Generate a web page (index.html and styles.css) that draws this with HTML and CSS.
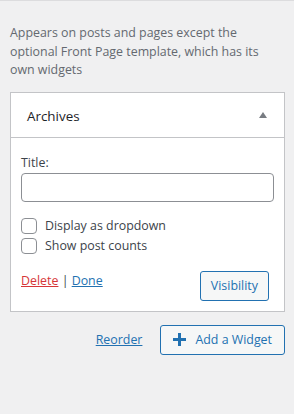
FILE: index.html
```html
<!DOCTYPE html>
<html lang="en">

<head>
  <meta charset="UTF-8">
  <title>Widget Area</title>
  <link rel="stylesheet" href="styles.css">
</head>

<body>
  <div class="panel">
    <p class="description">Appears on posts and pages except the optional Front Page template, which has its own widgets</p>

    <!-- Archives widget -->
    <div class="widget">
      <div class="widget-top">
        <h3>Archives</h3>
        <span class="toggle"></span>
      </div>

      <div class="widget-inside">
        <label class="field-label" for="title">Title:</label>
        <input type="text" id="title" class="text-input">

        <div class="checks">
          <label class="check"><input type="checkbox"> Display as dropdown</label>
          <label class="check"><input type="checkbox"> Show post counts</label>
        </div>

        <div class="widget-actions">
          <div class="links">
            <a href="#" class="delete">Delete</a> | <a href="#" class="done">Done</a>
          </div>
          <button class="button">Visibility</button>
        </div>
      </div>
    </div>

    <!-- Footer actions -->
    <div class="area-actions">
      <a href="#" class="reorder">Reorder</a>
      <button class="button add-widget">
        <svg width="13" height="13" viewBox="0 0 13 13"><path d="M5 0h3v5h5v3H8v5H5V8H0V5h5z" fill="#2271b1"/></svg>
        Add a Widget
      </button>
    </div>
  </div>
</body>

</html>
```

FILE: styles.css
```css
body {
  margin: 0;
  padding: 0;
  font-family: 'Open Sans', sans-serif;
  font-size: 12.4px;
  color: #3c434a;
  background-color: #f0f0f1;
}

.panel {
  border-top: 1px solid #dcdcde;
  padding: 23px 9px 0 10px;
}

.description {
  margin: 0 0 12px;
  color: #646970;
  line-height: 18.5px;
}

/* The widget card */
.widget {
  background: #fff;
  border: 1px solid #c3c4c7;
}

.widget-top {
  display: flex;
  justify-content: space-between;
  align-items: center;
  height: 44px;
  padding: 0 16px;
  border-bottom: 1px solid #c3c4c7;
}

.widget-top h3 {
  margin: 0;
  padding-top: 2px;
  font-size: 13.4px;
  font-weight: 400;
  color: #1d2327;
}

.toggle {
  width: 0;
  height: 0;
  border-left: 4.5px solid transparent;
  border-right: 4.5px solid transparent;
  border-bottom: 6px solid #787c82;
  margin-right: 1px;
}

.widget-inside {
  padding: 16px 10px 10px;
}

.field-label {
  display: block;
  line-height: 18px;
  color: #3c434a;
}

.text-input {
  display: block;
  box-sizing: border-box;
  width: 100%;
  height: 29px;
  margin: 1px 0 0;
  border: 1px solid #8c8f94;
  border-radius: 4px;
}

.checks {
  display: flex;
  flex-direction: column;
  gap: 4px;
  margin-top: 16px;
}

.check {
  display: flex;
  align-items: center;
  gap: 8px;
  line-height: 16px;
  color: #3c434a;
}

.check input {
  appearance: none;
  margin: 0;
  width: 16px;
  height: 16px;
  border: 1px solid #8c8f94;
  border-radius: 4px;
  background: #fff;
}

.widget-actions {
  display: flex;
  justify-content: space-between;
  align-items: flex-start;
  margin-top: 18px;
  padding-right: 5px;
}

.links {
  color: #3c434a;
  line-height: 18px;
}

.links a {
  text-decoration: underline;
}

.delete { color: #d63638; }
.done { color: #2271b1; }

.button {
  font-family: inherit;
  font-size: 12.4px;
  height: 30px;
  padding: 0 10px;
  color: #2271b1;
  background: #f6f7f7;
  border: 1px solid #2271b1;
  border-radius: 3px;
  margin-top: -1px;
}

.area-actions {
  display: flex;
  justify-content: flex-end;
  align-items: center;
  gap: 18px;
  margin-top: 13px;
}

.reorder {
  color: #2271b1;
  text-decoration: underline;
}

.add-widget {
  display: flex;
  align-items: center;
  gap: 9px;
  padding: 0 12px;
  margin-top: 0;
}
```
